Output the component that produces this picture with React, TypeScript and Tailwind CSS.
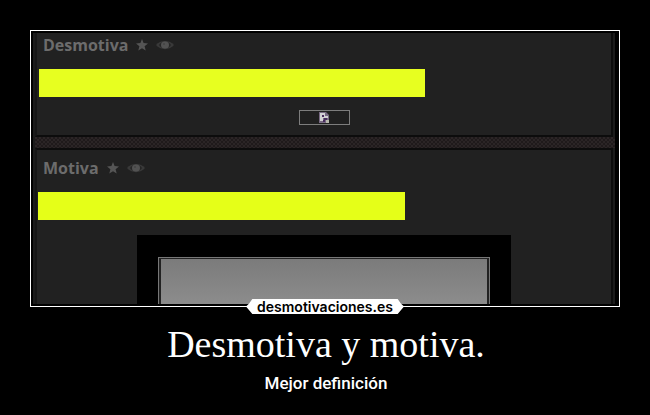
import React from "react";

function Star() {
  return (
    <svg viewBox="0 0 12 12" className="h-3 w-3" fill="#555" aria-hidden="true">
      <path d="M6 0 7.6 4.1 12 4.4 8.6 7.2 9.7 11.6 6 9.2 2.3 11.6 3.4 7.2 0 4.4 4.4 4.1Z" />
    </svg>
  );
}

function Eye() {
  return (
    <svg viewBox="0 0 18 10" className="h-[10px] w-[18px]" aria-hidden="true">
      <path d="M0 5C4-.5 14-.5 18 5 14 10.5 4 10.5 0 5Z" fill="#393939" />
      <path d="M3 5C4 3.400 5 2.800 6 2.500 5.300 4 5.300 6 6 7.500 5 7.200 4 6.600 3 5ZM15 5C14 3.400 13 2.800 12 2.500 12.700 4 12.700 6 12 7.500 13 7.200 14 6.600 15 5Z" fill="#262626" />
      <ellipse cx="9" cy="5" rx="4" ry="3.500" fill="#525252" />
      <circle cx="8" cy="4" r="1" fill="#444" />
    </svg>
  );
}

function Heading({ children }: { children: string }) {
  return (
    <div className="flex items-center gap-2 pl-1.5">
      <h2 className="font-['Open_Sans',sans-serif] text-[16px] leading-6 font-bold text-[#6c6c6c]">
        {children}
      </h2>
      <Star />
      <Eye />
    </div>
  );
}

export default function App() {
  return (
    <main className="min-h-screen bg-black px-[30px] pt-[30px] pb-4 text-center text-white">
      <div className="relative border border-white p-0.5">
        <div className="h-[271px] overflow-hidden border-r-2 border-black bg-[#1b1b1b] pl-0.5 text-left">
          <section className="mr-0.5 h-[104px] border-x-2 border-b-2 border-[#0c0c0c] border-l-[#161616] bg-[#212121]">
            <Heading>Desmotiva</Heading>
            <div className="mt-3 ml-0.5 h-7 w-[386px] bg-[#e7ff20]" />
            <div className="mx-auto mt-[13px] flex h-[15px] w-[51px] items-center justify-center border border-[#7d7d7d] bg-[#202020]">
              <svg viewBox="0 0 10 11" className="h-[11px] w-[10px]" aria-hidden="true">
                <path d="M0 0H7L10 3V11H0Z" fill="#776982" />
                <path d="M1 1H6V4H9V6H4V9H1Z" fill="#d1d0d3" />
                <path d="M3 3H5V5H3ZM5 6H8V8H6V10H4V8H5Z" fill="#482c5d" />
                <path d="M7 8H10V11H7Z" fill="#b7b8ad" />
              </svg>
            </div>
          </section>
          <div className="h-[11px] bg-[#282223] bg-[conic-gradient(#1f1a1b_25%,#2b2526_0_50%,#1f1a1b_0_75%,#2b2526_0)] bg-size-[4px_4px]" />
          <section className="mr-0.5 h-[156px] border-x-2 border-t-2 border-[#0c0c0c] border-l-[#161616] bg-[#212121] pt-1.5">
            <Heading>Motiva</Heading>
            <div className="mt-3 ml-px h-7 w-[367px] bg-[#e5ff18]" />
            <div className="mx-auto mt-[15px] h-[81px] w-[374px] bg-black px-[21px] pt-[22px]">
              <div className="h-full border border-b-0 border-[#777] bg-[#222] px-0.5 pt-px">
                <div className="h-full bg-linear-to-b from-[#7b7b7b] to-[#919191]" />
              </div>
            </div>
          </section>
        </div>
        <div className="absolute -bottom-2 left-1/2 flex h-[15px] w-[158px] -translate-x-1/2 items-center justify-center bg-white text-black [clip-path:polygon(4%_0,96%_0,98%_30%,100%_50%,98%_75%,96%_100%,4%_100%,2%_75%,0_50%,2%_30%)]">
          <span className="font-['Inter',sans-serif] text-[14px] leading-[15px] font-semibold">desmotivaciones.es</span>
        </div>
      </div>
      <h1 className="mt-[15px] pl-0.5 font-['Liberation_Serif',serif] text-[38px] leading-[44px]">Desmotiva y motiva.</h1>
      <p className="mt-1 pl-0.5 font-['Roboto',sans-serif] text-[17px] leading-[26px] font-medium">Mejor definición</p>
    </main>
  );
}
